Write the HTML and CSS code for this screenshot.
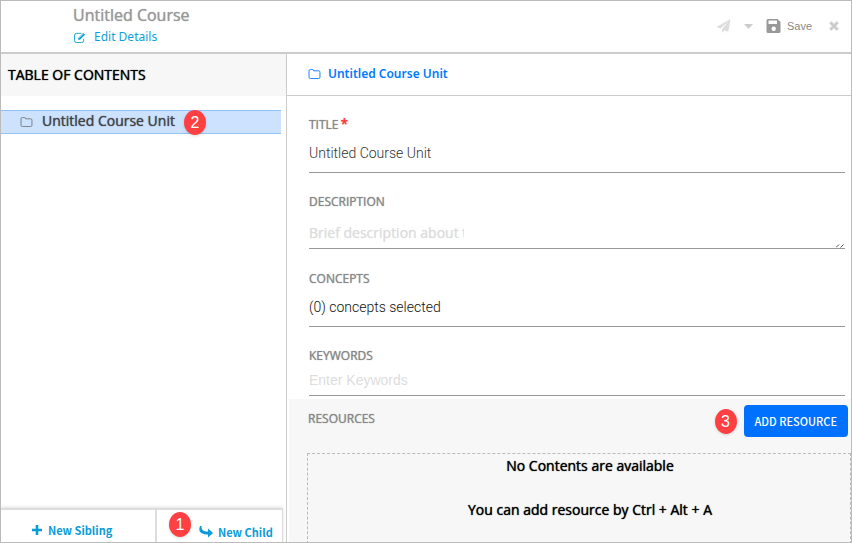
FILE: index.html
```html
<!DOCTYPE html>
<html lang="en">
<head>
<meta charset="utf-8">
<title>Untitled Course</title>
<link rel="stylesheet" href="styles.css">
</head>
<body>
<div class="editor">
  <header class="topbar">
    <div class="course">
      <h1 class="course-name">Untitled Course</h1>
      <a class="edit-link" href="#">
        <svg class="icon-edit" viewBox="0 0 13 12" aria-hidden="true"><path d="M8 1.5H2.5a2 2 0 0 0-2 2v6a2 2 0 0 0 2 2h6a2 2 0 0 0 2-2V7.500" fill="none" stroke="currentColor"/><path d="M4.500 6.500 10 1l2 2-5.500 5.500h-2z" fill="currentColor"/><path d="M5.500 6.500 9.500 2.500" stroke="#fff" stroke-width=".6"/></svg>
        Edit Details</a>
    </div>
    <div class="actions">
      <button class="tool" type="button" aria-label="Send">
        <svg class="icon-send" viewBox="0 0 14 14" aria-hidden="true"><path d="M14 0 11.800 12.800 7.800 11.200 5.500 14V10.300L12 2.500 4 9.600 0 8z"/></svg>
      </button>
      <button class="tool tool-caret" type="button" aria-label="More">
        <svg class="icon-caret" viewBox="0 0 9 5" aria-hidden="true"><path d="M0 0h9L4.500 5z"/></svg>
      </button>
      <button class="tool tool-save" type="button">
        <svg class="icon-save" viewBox="0 0 14 14" aria-hidden="true"><path fill-rule="evenodd" d="M1.500 0H11l3 3v9.500a1.500 1.500 0 0 1-1.500 1.500h-11A1.500 1.500 0 0 1 0 12.500v-11A1.500 1.500 0 0 1 1.500 0zM2 1.500v3.500h8.500V1.500zM7.200 7.500a2.200 2.200 0 1 0 0 4.400 2.200 2.200 0 0 0 0-4.400z"/></svg>
        Save</button>
      <button class="tool tool-close" type="button" aria-label="Close">
        <svg class="icon-close" viewBox="0 0 10 10" aria-hidden="true"><path d="M1.300 1.300 8.700 8.700M8.700 1.300 1.300 8.700" stroke="currentColor" stroke-width="3"/></svg>
      </button>
    </div>
  </header>
  <div class="workspace">
    <aside class="sidebar">
      <h2 class="toc-title">TABLE OF CONTENTS</h2>
      <div class="tree">
        <a class="tree-row" href="#">
          <svg class="icon-folder" viewBox="0 0 13 11" aria-hidden="true"><path d="M.5 2Q.5.500 2 .5h2Q5.500.500 5.500 2H11q1.500 0 1.500 1.500V9q0 1.500-1.500 1.500H2Q.5 10.500.5 9z"/></svg>
          <span class="tree-name">Untitled Course Unit</span>
          <span class="badge">2</span>
        </a>
      </div>
      <div class="sidebar-actions">
        <button class="add add-sibling" type="button">
          <svg class="icon-plus" viewBox="0 0 10 10" aria-hidden="true"><path d="M5 0v10M0 5h10" stroke="currentColor" stroke-width="2.600"/></svg>
          New Sibling</button>
        <button class="add add-child" type="button">
          <span class="badge">1</span>
          <svg class="icon-turn" viewBox="0 0 14 12" aria-hidden="true"><path d="M1 0h1.500C2.500 4 4 5.500 9 5.500V2.500L14 7l-5 4.500v-3C3 8.500-1.500 6.500 1 0z"/></svg>
          New Child</button>
      </div>
    </aside>
    <main class="detail">
      <h2 class="unit-title">
        <svg class="icon-folder" viewBox="0 0 13 11" aria-hidden="true"><path d="M.5 2Q.5.500 2 .5h2Q5.500.500 5.500 2H11q1.500 0 1.500 1.500V9q0 1.500-1.500 1.500H2Q.5 10.500.5 9z"/></svg>
        Untitled Course Unit</h2>
      <form class="fields">
        <div class="field">
          <label class="label" for="title">TITLE<span class="required">*</span></label>
          <input class="control" id="title" type="text" value="Untitled Course Unit">
        </div>
        <div class="field">
          <label class="label" for="description">DESCRIPTION</label>
          <div class="area">
            <textarea class="control-area" id="description" rows="1" placeholder="Brief description about t"></textarea>
            <svg class="icon-grip" viewBox="0 0 8 4" aria-hidden="true"><path d="M0 3.500 3 .5M4.500 3.500l3-3"/></svg>
          </div>
        </div>
        <div class="field">
          <label class="label" for="concepts">CONCEPTS</label>
          <input class="control control-dark" id="concepts" type="text" value="(0) concepts selected">
        </div>
        <div class="field field-short">
          <label class="label" for="keywords">KEYWORDS</label>
          <input class="control" id="keywords" type="text" placeholder="Enter Keywords">
        </div>
      </form>
      <section class="resources">
        <div class="resources-head">
          <h3 class="resources-title">RESOURCES</h3>
          <span class="badge">3</span>
          <button class="add-resource" type="button">ADD RESOURCE</button>
        </div>
        <div class="empty">
          <p class="empty-line">No Contents are available</p>
          <p class="empty-line">You can add resource by Ctrl + Alt + A</p>
        </div>
      </section>
    </main>
  </div>
</div>
</body>
</html>
```
FILE: styles.css
```css
* { box-sizing: border-box; }
body, h1, h2, h3, p { margin: 0; }
body {
  font-family: "Noto Sans", "Open Sans", sans-serif;
  font-size: 14px;
  color: #000;
  background: #fff;
}
button, input, textarea { margin: 0; padding: 0; border: 0; background: none; font: inherit; }
a { text-decoration: none; }
svg { display: block; flex: none; fill: currentColor; }

.course-name, .toc-title, .tree-name, .label, .resources-title, .empty-line {
  text-shadow: 0 0 1px currentColor;
}

.editor {
  display: flex;
  flex-direction: column;
  height: 100vh;
  border: 1px solid #bbb;
  overflow: hidden;
}

.topbar {
  display: flex;
  justify-content: space-between;
  padding: 3px 12px 4px 72px;
  border-bottom: 2px solid #ccc;
}
.course-name {
  font: 400 16px/22px "Open Sans", sans-serif;
  color: #999;
}
.edit-link {
  display: flex;
  align-items: center;
  gap: 8px;
  padding-left: 1px;
  font: 12px/22px "Noto Sans", sans-serif;
  color: #109fda;
}
.icon-edit { width: 12px; height: 11px; }
.actions { display: flex; align-items: center; color: #888; }
.tool { display: flex; align-items: center; color: #ddd; }
.icon-send { width: 15px; height: 14px; }
.tool-caret { margin-left: 13px; color: #ccc; }
.icon-caret { width: 9px; height: 5px; }
.tool-save {
  gap: 6px;
  margin-left: 13px;
  font: 11px/16px "Liberation Sans", sans-serif;
  color: #888;
}
.icon-save { width: 15px; height: 14px; color: #999; }
.tool-close { margin-left: 17px; color: #ccc; }
.icon-close { width: 10px; height: 10px; }

.workspace { display: flex; flex: 1; min-height: 0; }

.sidebar {
  display: flex;
  flex-direction: column;
  flex: 0 0 286px;
  border-right: 1px solid #ccc;
}
.toc-title {
  padding-left: 7px;
  background: #f7f7f7;
  font: 400 14px/42px "Open Sans", sans-serif;
}
.tree { flex: 1; padding: 14px 5px 0 0; }
.tree-row {
  display: flex;
  align-items: center;
  height: 24px;
  padding-left: 19px;
  border: solid #8fc3f7;
  border-width: 1px 0;
  background: #cce2ff;
  font: 400 14px/20px "Open Sans", sans-serif;
  color: #444;
}
.tree-name { padding-bottom: 2px; }
.icon-folder { width: 13px; height: 11px; fill: none; stroke: currentColor; margin-right: 9px; }
.tree-row .icon-folder { height: 10px; color: #777; }
.badge {
  flex: none;
  width: 22px;
  height: 25px;
  border-radius: 50%;
  background: #fe4042;
  box-shadow: 0 1px 3px rgba(0, 0, 0, .15);
  font: 16px/25px "Liberation Sans", sans-serif;
  text-align: center;
  color: #fff;
}
.tree-row .badge { margin-left: 9px; }

.sidebar-actions {
  display: flex;
  height: 34px;
  margin-right: 3px;
  border-top: 2px solid #ddd;
  border-right: 1px solid #ddd;
  box-shadow: 0 -1px 3px rgba(0, 0, 0, .12);
}
.add {
  display: flex;
  align-items: center;
  font: 700 11px/16px "Noto Sans CJK SC", sans-serif;
  color: #0a9bd8;
}
.add-sibling {
  flex: 0 0 156px;
  gap: 6px;
  padding: 8px 0 0 31px;
  border-right: 2px solid #ddd;
}
.add-child { flex: 1; gap: 5px; padding: 12px 0 0 12px; }
.add-child .badge { margin: -16px 3px 0 0; }
.icon-plus { width: 10px; height: 10px; }
.icon-turn { width: 14px; height: 12px; }

.detail { display: flex; flex-direction: column; flex: 1; min-width: 0; }
.unit-title {
  display: flex;
  align-items: center;
  height: 42px;
  padding: 0 0 1px 21px;
  border-bottom: 1px solid #ccc;
  font: 600 12px/38px "Noto Sans", sans-serif;
  color: #007aff;
}
.unit-title .icon-folder { height: 10px; margin-right: 7px; }

.fields { padding: 20px 6px 0 22px; }
.field { height: 77px; }
.field-short { height: 52px; }
.label {
  display: block;
  height: 16px;
  font: 400 12px/18px "Open Sans", sans-serif;
  color: #888;
}
.required { margin-left: 2px; color: #f33; font-size: 14px; line-height: 12px; }
.control {
  display: block;
  width: 100%;
  height: 41px;
  padding-top: 2px;
  border-bottom: 1px solid #999;
  font: 300 14px/20px Roboto, "Liberation Sans", sans-serif;
  color: #333;
  outline: 0;
}
.control-dark { color: #111; }
.field-short .control { height: 33px; }
.control::placeholder { color: #ddd; opacity: 1; font-family: "Liberation Sans", sans-serif; font-weight: 400; }
.area {
  display: flex;
  align-items: flex-end;
  justify-content: space-between;
  height: 40px;
  border-bottom: 1px solid #999;
}
.control-area {
  width: 155px;
  height: 25px;
  resize: none;
  overflow: hidden;
  white-space: nowrap;
  font: 400 14px/20px "Open Sans", sans-serif;
  outline: 0;
}
.control-area::placeholder { color: #ddd; opacity: 1; text-shadow: 0 0 1px #ddd; }
.icon-grip { width: 8px; height: 4px; fill: none; stroke: #555; margin-right: 1px; }

.resources {
  flex: 1;
  display: flex;
  flex-direction: column;
  min-height: 0;
  margin-left: 2px;
  padding: 6px 0 0 18px;
  background: #f7f7f7;
}
.resources-head {
  display: flex;
  align-items: center;
  padding-right: 3px;
}
.resources-title {
  margin-right: auto;
  padding: 0 0 4px 1px;
  font: 400 12px/20px "Open Sans", sans-serif;
  color: #888;
}
.add-resource {
  height: 32px;
  margin-left: 7px;
  padding: 0 11px;
  border-radius: 4px;
  background: #0071ff;
  font: 500 11px/32px "Noto Sans CJK SC", sans-serif;
  color: #fff;
}
.empty {
  flex: 1;
  margin-top: 16px;
  border: 1px dashed #bbb;
  border-bottom: 0;
  text-align: center;
}
.empty-line { margin: 2px 0 24px 22px; font: 400 14px/20px "Open Sans", sans-serif; }
```
